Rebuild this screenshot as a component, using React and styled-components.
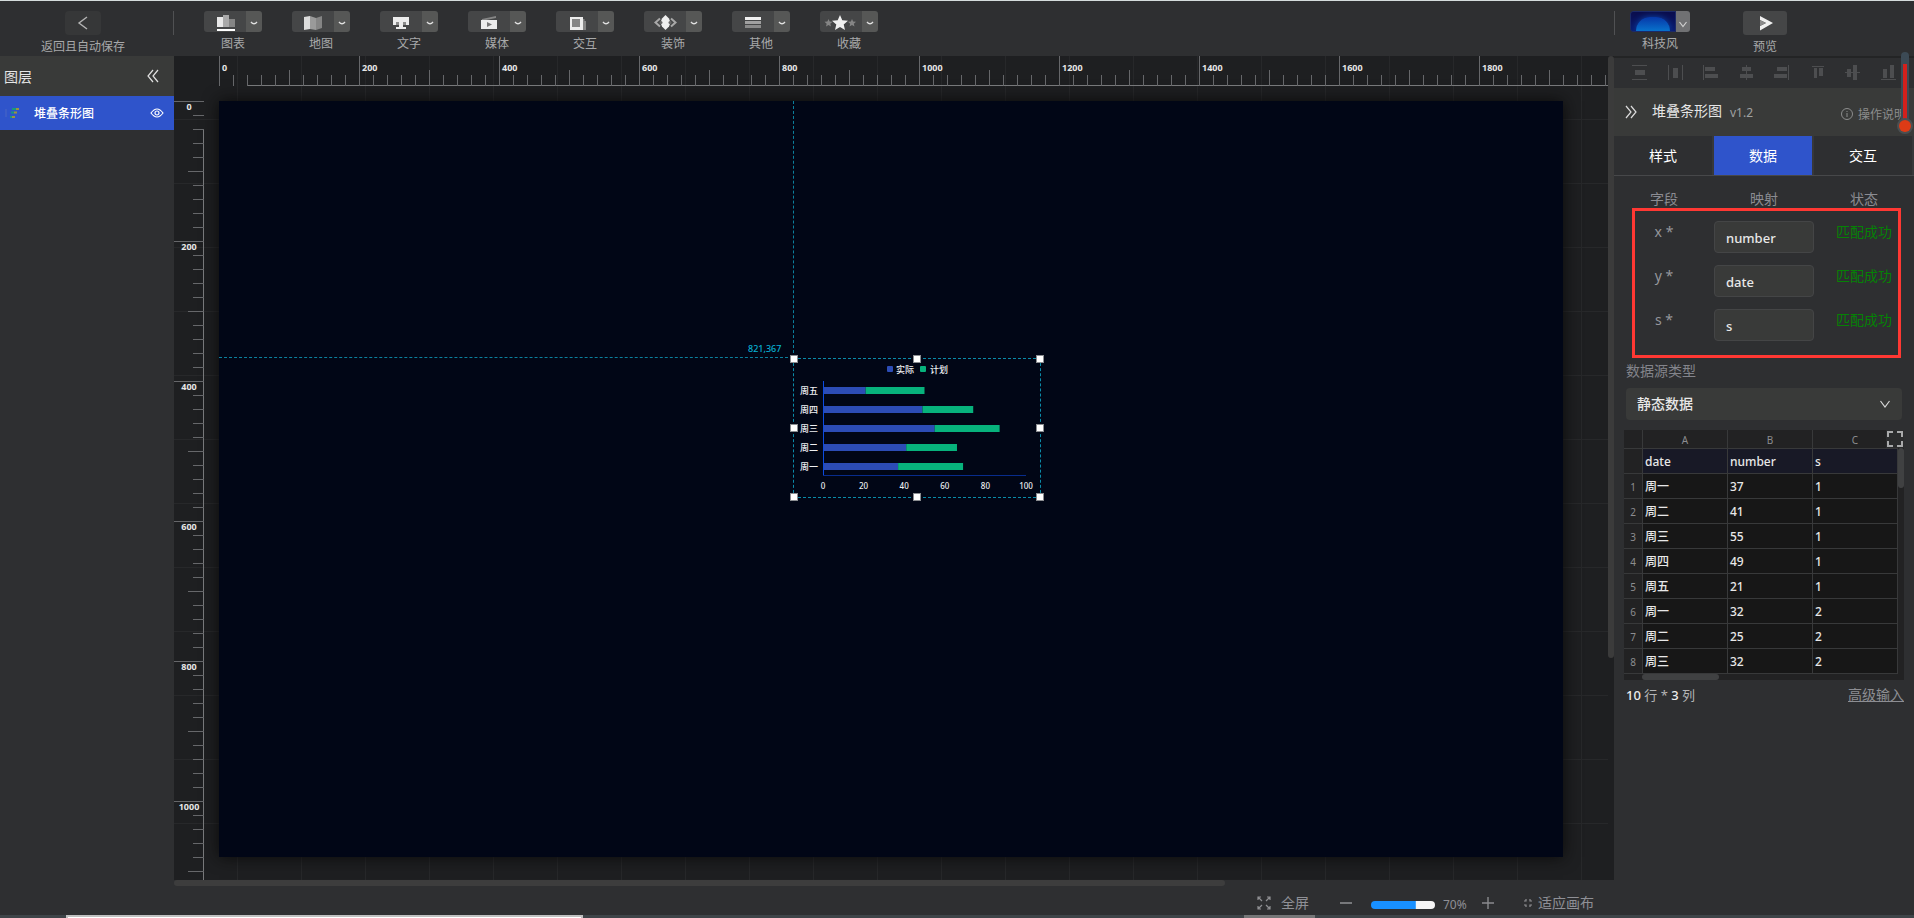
import React, { useState } from 'react';
import styled, { createGlobalStyle } from 'styled-components';

const GlobalStyle = createGlobalStyle`
    * {
        box-sizing: border-box;
    }

    body {
        margin: 0;
        background: #2e2f31;
        color: #e6e6e6;
        font-family: "Noto Sans", "Noto Sans CJK SC", sans-serif;
        font-size: 14px;
    }

    button, input, select {
        font-family: inherit;
        margin: 0;
        padding: 0;
        border: none;
        outline: none;
    }

    button {
        background: none;
        color: inherit;
        cursor: pointer;
    }
`;

const SCALE = 0.7;
const STEP = 14;
const ORIGIN_X = 45;
const ORIGIN_Y = 45;

const STAR = 'M0 -8 L2.3 -2.8 L8 -2.3 L3.7 1.5 L5 7 L0 4.1 L-5 7 L-3.7 1.5 L-8 -2.3 L-2.3 -2.8 Z';

const tools = [
    {
        name: '图表',
        icon: (
            <>
                <rect x="13" y="6" width="6" height="10" fill="#e8e8e8" />
                <rect x="19" y="4" width="6" height="12" fill="#a9a9a9" />
                <rect x="25" y="8" width="6" height="8" fill="#858585" />
                <rect x="13" y="18" width="18" height="2" fill="#fff" />
            </>
        ),
    },
    {
        name: '地图',
        icon: (
            <>
                <path d="M12 6 L18 5 V18 L12 19 Z" fill="#dcdcdc" />
                <path d="M18 5 L24 7 V19 L18 18 Z" fill="#9a9a9a" />
                <path d="M24 7 L30 5 V17 L24 19 Z" fill="#858585" />
            </>
        ),
    },
    {
        name: '文字',
        icon: (
            <>
                <path d="M13 6 H29 V14 H26 V11 H23 V16 H26 V18 H16 V16 H19 V11 H16 V14 H13 Z" fill="#ececec" />
                <path d="M16 11 H19 V14 H16 Z M23 11 H26 V14 H23 Z" fill="#8b8b8b" />
            </>
        ),
    },
    {
        name: '媒体',
        icon: (
            <>
                <path d="M14 8 L28 5 V7 L18 9 H14 Z" fill="#858585" />
                <rect x="13" y="9" width="16" height="9" fill="#ececec" />
                <path d="M19 11 L24 13.5 L19 16 Z" fill="#777" />
            </>
        ),
    },
    {
        name: '交互',
        icon: (
            <>
                <path d="M27 8 H28.5 V10 H30 V19 H27 Z" fill="#858585" />
                <rect x="14" y="6" width="13" height="13" fill="#ececec" />
                <rect x="16" y="8" width="8" height="8" fill="#858585" />
            </>
        ),
    },
    {
        name: '装饰',
        icon: (
            <>
                <path d="M16 7.5 L11.5 11.5 L16 15.5 M27 7.5 L31.5 11.5 L27 15.5" fill="none" stroke="#a8a8a8" strokeWidth="2" />
                <path d="M21.5 4 L25 7.5 L26.5 11.5 L25 15.5 L21.5 19 L18 15.5 L16.5 11.5 L18 7.5 Z" fill="#f0f0f0" />
                <circle cx="17" cy="11.5" r="1.5" fill="#666" />
                <circle cx="26" cy="11.5" r="1.5" fill="#666" />
            </>
        ),
    },
    {
        name: '其他',
        icon: (
            <>
                <rect x="13" y="6" width="16" height="3" fill="#f0f0f0" />
                <rect x="13" y="10" width="16" height="3" fill="#a0a0a0" />
                <rect x="13" y="14" width="16" height="3" fill="#8a8a8a" />
            </>
        ),
    },
    {
        name: '收藏',
        icon: (
            <>
                <path d={STAR} transform="translate(8.5 12) scale(0.5)" fill="#858585" />
                <path d={STAR} transform="translate(32 12) scale(0.5)" fill="#858585" />
                <path d={STAR} transform="translate(20 12)" fill="#f0f0f0" />
            </>
        ),
    },
];

const aligns = [
    { name: '垂直分布', d: 'M0 0 H15 V1 H0 Z M3 5 H13 V10 H3 Z M0 14 H15 V15 H0 Z' },
    { name: '水平分布', d: 'M0 0 H1 V15 H0 Z M5 3 H10 V13 H5 Z M14 0 H15 V15 H14 Z' },
    { name: '左对齐', d: 'M0 0 H1 V15 H0 Z M2 2 H12 V6 H2 Z M2 9 H15 V13 H2 Z' },
    { name: '水平居中', d: 'M7 0 H8 V2 H12 V6 H8 V9 H14 V13 H8 V15 H7 V13 H1 V9 H7 V6 H3 V2 H7 Z' },
    { name: '右对齐', d: 'M14 0 H15 V15 H14 Z M3 2 H13 V6 H3 Z M0 9 H13 V13 H0 Z' },
    { name: '顶对齐', d: 'M2 1 H14 V2 H2 Z M4 3 H7 V13 H4 Z M9 3 H13 V11 H9 Z' },
    { name: '垂直居中', d: 'M0 7 H2 V4 H6 V7 H8 V0 H12 V7 H15 V8 H12 V15 H8 V8 H6 V12 H2 V8 H0 Z' },
    { name: '底对齐', d: 'M0 14 H15 V15 H0 Z M2 4 H6 V13 H2 Z M9 0 H13 V13 H9 Z' },
];

const fields = [
    { field: 'x', value: 'number' },
    { field: 'y', value: 'date' },
    { field: 's', value: 's' },
];

const rows = [
    ['周一', 37, 1],
    ['周二', 41, 1],
    ['周三', 55, 1],
    ['周四', 49, 1],
    ['周五', 21, 1],
    ['周一', 32, 2],
    ['周二', 25, 2],
    ['周三', 32, 2],
];

const bars = [
    { day: '周五', real: 21, plan: 29 },
    { day: '周四', real: 49, plan: 25 },
    { day: '周三', real: 55, plan: 32 },
    { day: '周二', real: 41, plan: 25 },
    { day: '周一', real: 37, plan: 32 },
];

function TopBar() {
    return (
        <Header>
            <BackCell>
                <Tool>
                    <BackButton aria-label="返回">
                        <svg width="36" height="24" fill="none" stroke="#b4b4b4" strokeWidth="1.4">
                            <path d="M22 6 L14 12 L22 18" />
                        </svg>
                    </BackButton>
                    返回且自动保存
                </Tool>
                <Divider />
            </BackCell>
            <ToolList>
                {tools.map((tool) => (
                    <Tool key={tool.name}>
                        <Split>
                            <SplitMain aria-label={tool.name}>
                                <svg width="42" height="24">{tool.icon}</svg>
                            </SplitMain>
                            <SplitArrow aria-label={`${tool.name}更多`}>
                                <svg width="16" height="24" fill="none" stroke="#e0e0e0" strokeWidth="1.4">
                                    <path d="M5 11 Q8 14.5 11 11" />
                                </svg>
                            </SplitArrow>
                        </Split>
                        {tool.name}
                    </Tool>
                ))}
            </ToolList>
            <HeaderRight>
                <Divider />
                <Tool>
                    <Split>
                        <ThemeButton aria-label="科技风">
                            <ThemeGlow />
                        </ThemeButton>
                        <ThemeArrow aria-label="切换主题">
                            <svg width="14" height="24" fill="none" stroke="#d0d0d0" strokeWidth="1.2">
                                <path d="M3.5 11 L7 15.5 L10.5 11" />
                            </svg>
                        </ThemeArrow>
                    </Split>
                    科技风
                </Tool>
                <Tool>
                    <PreviewButton aria-label="预览">
                        <svg width="44" height="24">
                            <path d="M17 5 L30 12 L17 19.5 V15 L23 12 L17 9 Z" fill="#f0f0f0" />
                            <path d="M17 9 L23 12 L17 15 Z" fill="#8a8a8a" />
                        </svg>
                    </PreviewButton>
                    预览
                </Tool>
            </HeaderRight>
        </Header>
    );
}

function LayerPanel() {
    return (
        <Layers>
            <LayersHead>
                图层
                <IconButton aria-label="收起">
                    <svg width="12" height="14" fill="none" stroke="#e0e0e0" strokeWidth="1.2">
                        <path d="M6 1 L1 7 L6 13 M11 1 L6 7 L11 13" />
                    </svg>
                </IconButton>
            </LayersHead>
            <LayerRow>
                <svg width="16" height="12">
                    <path d="M1 2 V10" stroke="#4a66c4" />
                    <path d="M7 2 H11 M6 5.5 H9 M5 10 H7" stroke="#189a7c" strokeWidth="2" />
                    <path d="M11 2 H14 M9 5.5 H12 M7 10 H10" stroke="#9a9440" strokeWidth="2" />
                </svg>
                <LayerName>堆叠条形图</LayerName>
                <IconButton aria-label="显示">
                    <svg width="14" height="10" fill="none" stroke="#fff" strokeWidth="1.2">
                        <path d="M1 5 Q7 -3 13 5 Q7 13 1 5 Z" />
                        <circle cx="7" cy="5" r="2" />
                    </svg>
                </IconButton>
            </LayerRow>
        </Layers>
    );
}

function Rulers() {
    const across = Array.from({ length: 150 }, (_, i) => i);
    const down = Array.from({ length: 80 }, (_, i) => i);

    return (
        <>
            <TopRuler>
                <path d="M74 29.5 H3000" stroke="#77787a" />
                {across.map((i) => {
                    const x = ORIGIN_X + i * STEP + 0.5;
                    const top = i % 10 === 0 ? 0 : i % 5 === 0 ? 14 : 19;
                    return <path key={i} d={`M${x} ${top} V30`} stroke="#66676a" />;
                })}
                {across.filter((i) => i % 10 === 0 && i < 96).map((i) => (
                    <text key={i} x={ORIGIN_X + i * STEP + 3} y="15">{i * 20}</text>
                ))}
            </TopRuler>
            <SideRuler>
                <path d="M29.5 74 V2000" stroke="#77787a" />
                {down.map((i) => {
                    const y = ORIGIN_Y + i * STEP + 0.5;
                    const left = i % 10 === 0 ? 0 : i % 5 === 0 ? 14 : 19;
                    return <path key={i} d={`M${left} ${y} H30`} stroke="#66676a" />;
                })}
                {down.filter((i) => i % 10 === 0 && i < 54).map((i) => (
                    <text key={i} x="15" y={ORIGIN_Y + i * STEP + 9} textAnchor="middle">{i * 20}</text>
                ))}
            </SideRuler>
        </>
    );
}

function StackedBars() {
    const unit = 2.03;
    return (
        <Chart viewBox="0 0 246 138">
            <rect x="93" y="7" width="6" height="6" rx="1" fill="#2c4cb5" />
            <Caption x="102" y="14">实际</Caption>
            <rect x="126" y="7" width="6" height="6" rx="1" fill="#07b27c" />
            <Caption x="136" y="14">计划</Caption>
            {bars.map((bar, i) => (
                <g key={bar.day}>
                    <Caption x="24" y={35 + i * 19} textAnchor="end">{bar.day}</Caption>
                    <rect x="29" y={28 + i * 19} width={bar.real * unit} height="7" fill="#2c4cb5" />
                    <rect x={29 + bar.real * unit} y={28 + i * 19} width={bar.plan * unit} height="7" fill="#07b27c" />
                </g>
            ))}
            <path d="M29.5 22 V117" stroke="#0b4be0" />
            <path d="M29 116.5 H232" stroke="#082c8c" />
            {[0, 20, 40, 60, 80, 100].map((n) => (
                <text key={n} x={29 + n * unit} y="130" textAnchor="middle">{n}</text>
            ))}
        </Chart>
    );
}

function Workspace() {
    const [zoom, setZoom] = useState(70);

    return (
        <Center>
            <Board>
                <Stage>
                    <GuideX />
                    <GuideY />
                    <GuideText>821,367</GuideText>
                    <Selection>
                        <StackedBars />
                        {[0, 50, 100].map((x) => [0, 50, 100].map((y) => (
                            x === 50 && y === 50 ? null : <Handle key={`${x}-${y}`} $x={x} $y={y} />
                        )))}
                    </Selection>
                </Stage>
                <Rulers />
                <ScrollY />
            </Board>
            <ScrollX><span /></ScrollX>
            <StatusBar>
                <StatusButton>
                    <svg width="14" height="14" fill="none" stroke="#8f9093" strokeWidth="1.2">
                        <path d="M1 4 V1 H4 M1 1 L5 5 M10 1 H13 V4 M13 1 L9 5 M1 10 V13 H4 M1 13 L5 9 M10 13 H13 V10 M13 13 L9 9" />
                    </svg>
                    全屏
                </StatusButton>
                <ZoomGroup>
                    <IconButton aria-label="缩小" onClick={() => setZoom(Math.max(0, zoom - 10))}>
                        <svg width="12" height="12"><path d="M0 6 H12" stroke="#77787b" strokeWidth="2" /></svg>
                    </IconButton>
                    <Slider
                        type="range"
                        aria-label="缩放"
                        min="0"
                        max="100"
                        value={zoom}
                        style={{ backgroundSize: `${zoom}% 100%` }}
                        onChange={(e) => setZoom(Number(e.target.value))}
                    />
                    <Percent>{zoom}%</Percent>
                    <IconButton aria-label="放大" onClick={() => setZoom(Math.min(100, zoom + 10))}>
                        <svg width="12" height="12"><path d="M0 6 H12 M6 0 V12" stroke="#8a8b8e" strokeWidth="1.4" /></svg>
                    </IconButton>
                </ZoomGroup>
                <FitButton>
                    <svg width="10" height="10" fill="none" stroke="#8f9093" strokeWidth="1.2">
                        <path d="M1 3 H3 V1 M7 1 V3 H9 M1 7 H3 V9 M7 9 V7 H9" />
                    </svg>
                    适应画布
                </FitButton>
            </StatusBar>
        </Center>
    );
}

function SettingsPanel() {
    const [tab, setTab] = useState('数据');

    return (
        <Settings>
            <AlignBar>
                {aligns.map((item) => (
                    <IconButton key={item.name} aria-label={item.name}>
                        <svg width="15" height="15"><path d={item.d} fill="#4d4e50" /></svg>
                    </IconButton>
                ))}
            </AlignBar>
            <PanelHead>
                <IconButton aria-label="展开">
                    <svg width="12" height="14" fill="none" stroke="#dcdcdc" strokeWidth="1.2">
                        <path d="M1 1 L6 7 L1 13 M6 1 L11 7 L6 13" />
                    </svg>
                </IconButton>
                <PanelTitle>堆叠条形图</PanelTitle>
                <Version>v1.2</Version>
                <HelpLink href="#help">
                    <svg width="12" height="12" fill="none" stroke="#8c8d8d">
                        <circle cx="6" cy="6" r="5.5" />
                        <path d="M6 5 V9 M6 3 V4" />
                    </svg>
                    操作说明
                </HelpLink>
                <Gauge><span /></Gauge>
            </PanelHead>
            <Tabs>
                {['样式', '数据', '交互'].map((name) => (
                    <Tab key={name} $active={name === tab} onClick={() => setTab(name)}>{name}</Tab>
                ))}
            </Tabs>
            <FieldHead>
                <span>字段</span>
                <span>映射</span>
                <span>状态</span>
            </FieldHead>
            <FieldList>
                {fields.map((item) => (
                    <FieldRow key={item.field}>
                        <label htmlFor={`field-${item.field}`}>{item.field} *</label>
                        <FieldInput id={`field-${item.field}`} type="text" defaultValue={item.value} />
                        <Matched>匹配成功</Matched>
                    </FieldRow>
                ))}
            </FieldList>
            <Source>
                <SourceLabel htmlFor="source">数据源类型</SourceLabel>
                <SelectBox>
                    <select id="source" defaultValue="static">
                        <option value="static">静态数据</option>
                    </select>
                    <svg width="10" height="8" fill="none" stroke="#d8d8d8" strokeWidth="1.2">
                        <path d="M0.5 1 L5 7 L9.5 1" />
                    </svg>
                </SelectBox>
                <Sheet>
                    <SheetTable>
                        <thead>
                            <tr>
                                <th />
                                <th>A</th>
                                <th>B</th>
                                <th>C</th>
                            </tr>
                        </thead>
                        <tbody>
                            <TitleRow>
                                <th />
                                <td>date</td>
                                <td>number</td>
                                <td>s</td>
                            </TitleRow>
                            {rows.map((row, i) => (
                                <tr key={i}>
                                    <th>{i + 1}</th>
                                    {row.map((cell, j) => <td key={j}>{cell}</td>)}
                                </tr>
                            ))}
                        </tbody>
                    </SheetTable>
                    <SheetScrollX />
                    <SheetScrollY />
                    <ExpandButton aria-label="放大表格">
                        <svg width="16" height="16" fill="none" stroke="#a9aaab" strokeWidth="2">
                            <path d="M1 6 V1 H6 M10 1 H15 V6 M15 10 V15 H10 M6 15 H1 V10" />
                        </svg>
                    </ExpandButton>
                </Sheet>
                <SheetFoot>
                    <span><b>10</b> 行 * <b>3</b> 列</span>
                    <a href="#advanced">高级输入</a>
                </SheetFoot>
            </Source>
        </Settings>
    );
}

function App() {
    return (
        <Page>
            <GlobalStyle />
            <TopBar />
            <Main>
                <LayerPanel />
                <Workspace />
                <SettingsPanel />
            </Main>
            <BottomEdge>
                <EdgeWindow />
                <EdgeMark />
            </BottomEdge>
        </Page>
    );
}

export default App;


const Page = styled.div`
    display: flex;
    flex-direction: column;
    min-height: 100vh;
`;

const Header = styled.header`
    display: flex;
    height: 56px;
    border-top: 1px solid #d5dcdc;
    padding-top: 10px;
`;

const BackCell = styled.div`
    display: flex;
    justify-content: space-between;
    width: 174px;
    padding-left: 41px;
`;

const Divider = styled.div`
    width: 1px;
    height: 24px;
    background: #505153;
`;

const ToolList = styled.div`
    display: flex;
    flex: 1;
    gap: 30px;
    padding-left: 30px;
`;

const HeaderRight = styled.div`
    display: flex;
    width: 300px;

    > :nth-child(2) {
        margin-left: 15px;
    }

    > :nth-child(3) {
        margin-left: 53px;
    }
`;

const Tool = styled.div`
    display: flex;
    flex-direction: column;
    align-items: center;
    font-size: 12px;
    line-height: 24px;
    color: #a8a9aa;
    white-space: nowrap;
`;

const BackButton = styled.button`
    width: 36px;
    height: 24px;
    border-radius: 4px;
    background: #363738;
`;

const Split = styled.div`
    display: flex;
    height: 24px;
    border-radius: 3px;
    overflow: hidden;
`;

const SplitMain = styled.button`
    width: 42px;
    background: #454647;
`;

const SplitArrow = styled.button`
    width: 16px;
    background: #565756;
`;

const ThemeButton = styled.button`
    display: flex;
    align-items: flex-end;
    justify-content: center;
    width: 46px;
    overflow: hidden;
    border: 1px solid #1c2a68;
    border-radius: 3px 0 0 3px;
    background: linear-gradient(#0a0d4c, #0a1c72);
`;

const ThemeGlow = styled.span`
    width: 34px;
    height: 14px;
    border-radius: 17px 17px 0 0;
    background: linear-gradient(#0737a8, #0872cc);
    box-shadow: 0 0 6px #0b46a8;
`;

const ThemeArrow = styled.button`
    width: 14px;
    background: #707173;
`;

const PreviewButton = styled.button`
    width: 44px;
    height: 24px;
    border-radius: 3px;
    background: #454647;
`;

const IconButton = styled.button`
    display: flex;
`;

const Main = styled.main`
    display: flex;
    flex: 1;
`;

const Layers = styled.aside`
    width: 174px;
`;

const LayersHead = styled.div`
    display: flex;
    align-items: center;
    justify-content: space-between;
    height: 40px;
    padding: 0 15px 0 4px;
    background: #393a39;
`;

const LayerRow = styled.div`
    display: flex;
    align-items: center;
    height: 34px;
    padding: 0 10px 0 5px;
    background: #2f54cb;
    color: #fff;
`;

const LayerName = styled.span`
    flex: 1;
    margin-left: 13px;
    font-size: 12px;
    font-weight: 500;
`;

const Center = styled.section`
    display: flex;
    flex-direction: column;
    flex: 1;
    min-width: 0;
`;

const Board = styled.div`
    position: relative;
    flex: 1;
    overflow: hidden;
    background-color: #1e1f21;
    background-image:
        linear-gradient(to left, #27282a 1px, transparent 1px),
        linear-gradient(to top, #27282a 1px, transparent 1px);
    background-size: 64px 64px;
`;

/* the artboard is 1920 x 1080 shown at the current scale */
const Stage = styled.div`
    position: absolute;
    left: ${ORIGIN_X}px;
    top: ${ORIGIN_Y}px;
    width: ${1920 * SCALE}px;
    height: ${1080 * SCALE}px;
    background: #010616;
    box-shadow: 0 0 15px #0a0a0a;
`;

const GuideX = styled.div`
    position: absolute;
    left: 574px;
    top: 0;
    height: 257px;
    border-left: 1px dashed #0b7f9c;
`;

const GuideY = styled.div`
    position: absolute;
    left: 0;
    top: 256px;
    width: 574px;
    border-top: 1px dashed #0b7f9c;
`;

const GuideText = styled.span`
    position: absolute;
    left: 529px;
    top: 241px;
    font-size: 9px;
    font-weight: 500;
    line-height: 14px;
    color: #08b0d2;
`;

const Selection = styled.div`
    position: absolute;
    left: 574px;
    top: 257px;
    width: 248px;
    height: 140px;
    border: 1px dashed #0b8aa8;
`;

const Chart = styled.svg`
    display: block;
    width: 100%;
    height: 100%;

    text {
        font-size: 8px;
        font-weight: 500;
        fill: #eeeff2;
    }
`;

const Caption = styled.text`
    && {
        font-size: 9px;
    }
`;

const Handle = styled.span`
    position: absolute;
    left: ${(props) => props.$x}%;
    top: ${(props) => props.$y}%;
    width: 8px;
    height: 8px;
    margin: -4px;
    border: 1px solid #8a8c90;
    background: #fff;
    background-clip: border-box;
`;

const TopRuler = styled.svg`
    position: absolute;
    left: 0;
    top: 0;
    width: 100%;
    height: 30px;

    text {
        font-size: 9px;
        font-weight: 700;
        fill: #e6e6e6;
    }
`;

const SideRuler = styled.svg`
    position: absolute;
    left: 0;
    top: 0;
    width: 30px;
    height: 100%;

    text {
        font-size: 9px;
        font-weight: 700;
        fill: #e6e6e6;
    }
`;

const ScrollY = styled.div`
    position: absolute;
    top: 0;
    right: 0;
    bottom: 0;
    width: 6px;
    background: #1e1f21;

    &::before {
        content: "";
        display: block;
        height: 73%;
        border-radius: 3px;
        background: #3b3b3b;
    }
`;

const ScrollX = styled.div`
    height: 6px;

    span {
        display: block;
        width: 73%;
        height: 6px;
        border-radius: 3px;
        background: #3d3d3d;
    }
`;

const StatusBar = styled.footer`
    display: flex;
    align-items: center;
    justify-content: flex-end;
    height: 29px;
    padding: 4px 20px 0 0;
    color: #8f9096;
`;

const StatusButton = styled.button`
    display: flex;
    align-items: center;
    gap: 10px;
    font-size: 14px;
    line-height: 20px;
`;

const FitButton = styled(StatusButton)`
    gap: 5px;
`;

const ZoomGroup = styled.div`
    display: flex;
    align-items: center;
    margin: 0 29px 0 31px;
`;

const Slider = styled.input`
    appearance: none;
    width: 64px;
    height: 8px;
    margin: 4px 8px 0 19px;
    border-radius: 4px;
    background: #f5f5f5 linear-gradient(#1890ff, #1890ff) no-repeat;

    &::-webkit-slider-thumb {
        appearance: none;
        width: 8px;
        height: 8px;
    }
`;

const Percent = styled.span`
    width: 39px;
    padding-top: 4px;
    font-size: 12px;
    line-height: 16px;
`;

const Settings = styled.aside`
    width: 300px;
    border-top: 2px solid #232425;
`;

const AlignBar = styled.div`
    display: flex;
    align-items: center;
    justify-content: space-between;
    height: 30px;
    padding: 0 18px 1px;
`;

const PanelHead = styled.div`
    position: relative;
    display: flex;
    align-items: center;
    height: 48px;
    padding: 0 8px 0 11px;
    background: #393a39;
`;

const PanelTitle = styled.h2`
    margin: 0 8px 0 15px;
    padding-bottom: 2px;
    font-size: 14px;
    font-weight: 400;
    line-height: 20px;
    color: #e6e6e6;
`;

const Version = styled.span`
    flex: 1;
    font-size: 12px;
    color: #a0a1a1;
`;

const HelpLink = styled.a`
    display: flex;
    align-items: center;
    gap: 5px;
    padding-top: 4px;
    font-size: 12px;
    color: #8c8d8d;
    text-decoration: none;
`;

/* marker pinned on the panel edge */
const Gauge = styled.div`
    position: absolute;
    right: 5px;
    top: -36px;
    display: flex;
    justify-content: center;
    width: 8px;
    height: 76px;
    border-radius: 4px;
    background: #3c4a55;

    span {
        width: 4px;
        margin-top: 12px;
        background: #d3201c;
    }

    &::after {
        content: "";
        position: absolute;
        left: -2px;
        bottom: -4px;
        width: 12px;
        height: 12px;
        border-radius: 50%;
        background: #de3b16;
        box-shadow: 0 0 0 2px #4a4f52;
    }
`;

const Tabs = styled.div`
    display: grid;
    grid-template-columns: repeat(3, 1fr);
    gap: 2px;
    padding-right: 2px;
    background: #37383a;
    border-bottom: 1px solid #47484a;
`;

const Tab = styled.button`
    height: 39px;
    padding-bottom: 2px;
    background: ${(props) => (props.$active ? '#2f54cb' : '#2e2f31')};
    color: #fff;
    font-size: 14px;
`;

const FieldHead = styled.div`
    display: grid;
    grid-template-columns: repeat(3, 1fr);
    height: 32px;
    padding-top: 12px;
    line-height: 22px;
    text-align: center;
    color: #8b8c92;
`;

const FieldList = styled.div`
    position: relative;
    padding: 13px 0 5px;

    &::after {
        content: "";
        position: absolute;
        inset: 0 13px 0 18px;
        border: 3px solid #ff3833;
        pointer-events: none;
    }
`;

const FieldRow = styled.div`
    display: grid;
    grid-template-columns: repeat(3, 1fr);
    height: 44px;
    line-height: 22px;
    text-align: center;
    color: #95969b;
`;

const FieldInput = styled.input`
    width: 100%;
    height: 32px;
    padding: 2px 11px 0;
    border: 1px solid #444546;
    border-radius: 4px;
    background: #393a39;
    color: #e8e8e8;
    font-size: 13px;
    font-weight: 500;
`;

const Matched = styled.span`
    color: #058205;
`;

const Source = styled.div`
    padding: 2px 10px 0 10px;
`;

const SourceLabel = styled.label`
    display: block;
    padding-left: 2px;
    line-height: 22px;
    color: #83848b;
`;

const SelectBox = styled.div`
    display: flex;
    align-items: center;
    height: 32px;
    margin: 6px 2px 10px;
    padding: 0 12px 0 11px;
    border-radius: 4px;
    background: #393a39;

    select {
        flex: 1;
        padding-bottom: 2px;
        appearance: none;
        background: none;
        color: #e8e8e8;
        font-size: 14px;
        font-weight: 500;
    }
`;

const Sheet = styled.div`
    position: relative;
    padding: 0 6px 6px 0;
    background: #222223;
`;

const SheetTable = styled.table`
    width: 100%;
    table-layout: fixed;
    border-spacing: 0;
    font-size: 12px;
    color: #e8e8e8;

    th, td {
        height: 25px;
        padding: 2px 2px 0;
        border-right: 1px solid #38393a;
        border-bottom: 1px solid #38393a;
        line-height: 16px;
    }

    th {
        background: #222223;
        color: #8c8d90;
        font-size: 10px;
        font-weight: 400;
        text-align: center;
    }

    td {
        background: #171717;
        font-weight: 500;
    }

    thead th {
        height: 19px;
    }

    thead th:first-child {
        width: 19px;
    }
`;

const TitleRow = styled.tr`
    td {
        background: #181926;
    }
`;

const SheetScrollX = styled.div`
    position: absolute;
    left: 18px;
    bottom: 0;
    width: 77px;
    height: 6px;
    border-radius: 3px;
    background: #404142;
`;

const SheetScrollY = styled.div`
    position: absolute;
    top: 18px;
    right: 0;
    width: 6px;
    height: 40px;
    border-radius: 3px;
    background: #404142;
`;

const ExpandButton = styled.button`
    position: absolute;
    top: 0;
    right: 0;
    display: flex;
    padding: 1px;
    background: #2b2c2d;
`;

const SheetFoot = styled.div`
    display: flex;
    justify-content: space-between;
    padding: 4px 0 0 2px;
    line-height: 22px;
    font-size: 13px;
    color: #b4b5b6;

    b {
        font-weight: 500;
        color: #ececec;
    }

    a {
        font-size: 14px;
        color: #8d8e93;
    }
`;

const BottomEdge = styled.div`
    display: flex;
    height: 3px;
    padding-left: 66px;
    background: #3e4448;
`;

const EdgeWindow = styled.div`
    width: 28%;
    border: 1px solid #c0c0c0;
    border-width: 2px 2px 0;
    background: #fff;
`;

const EdgeMark = styled.div`
    width: 71px;
    margin-left: 661px;
    background: #757677;
`;
